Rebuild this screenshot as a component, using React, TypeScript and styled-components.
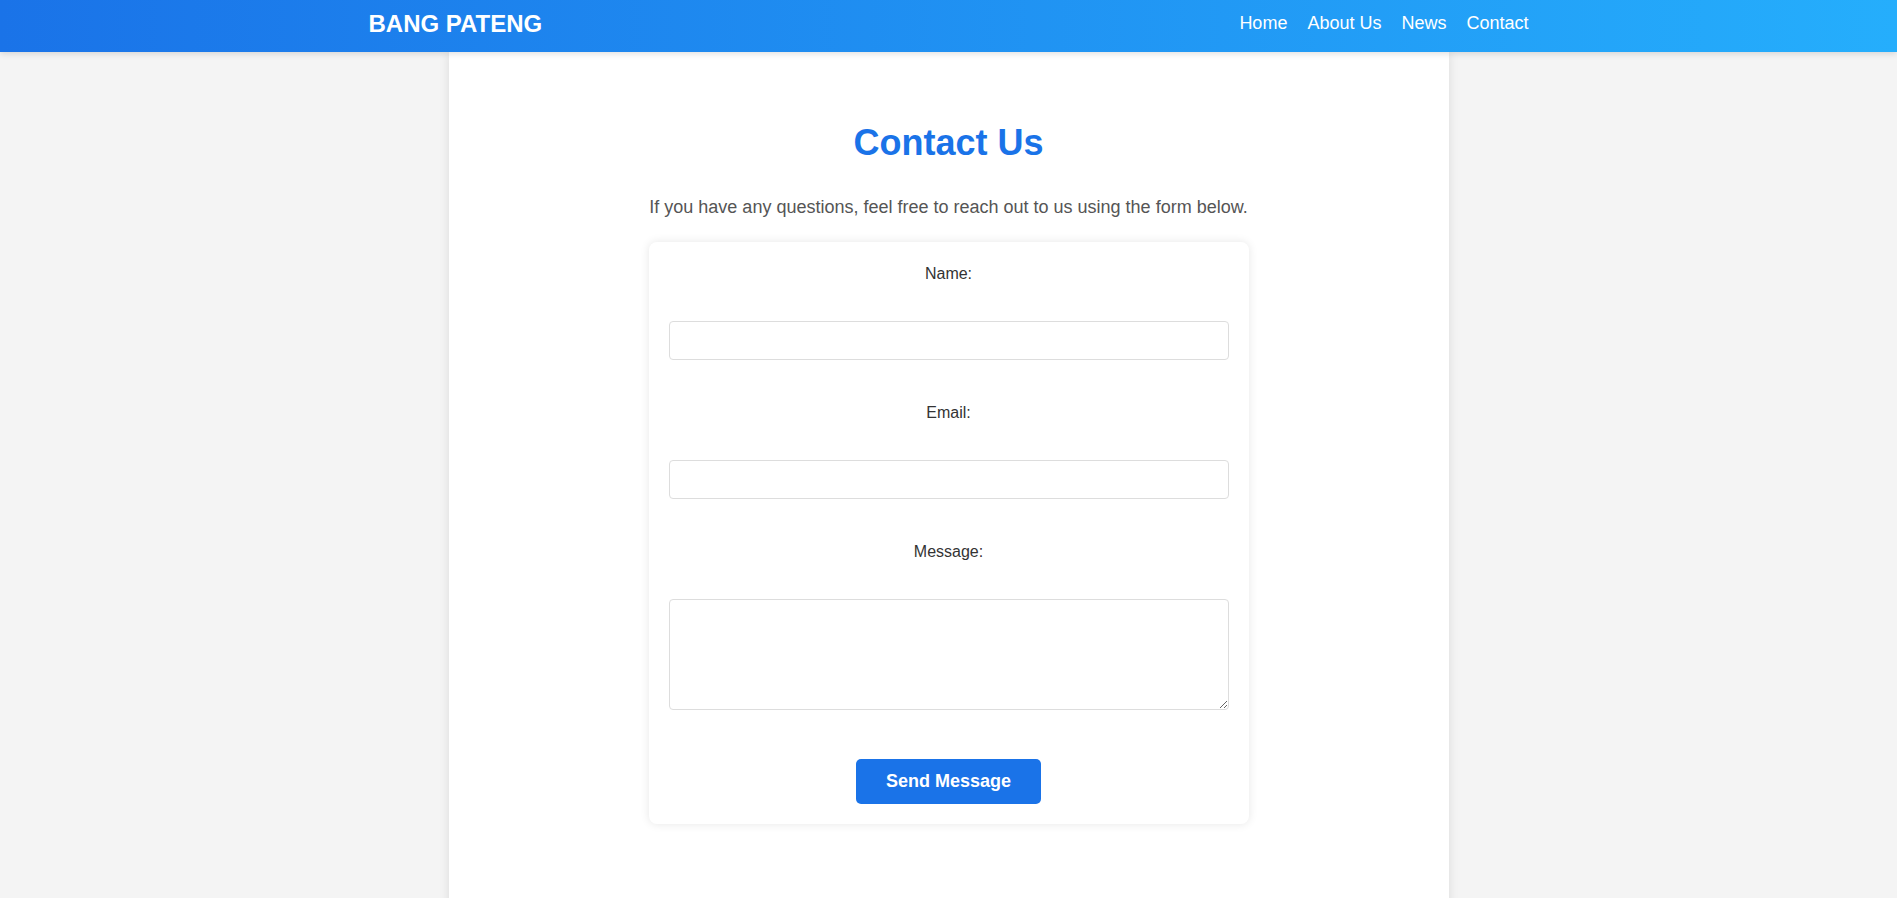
import React from 'react';
import styled, { createGlobalStyle } from 'styled-components';

const GlobalStyle = createGlobalStyle`
  body {
    margin: 0;
    background: #f4f4f4;
    font-family: "Liberation Sans", Arial, sans-serif;
  }
  * { box-sizing: border-box; }
`;

const Header = styled.header`
  height: 52px;
  background: linear-gradient(to right, #1a73e8, #25aefc);
  box-shadow: 0 2px 6px rgba(0, 0, 0, 0.12);
  position: relative;
  z-index: 1;
`;

const HeaderInner = styled.div`
  max-width: 1160px;
  height: 100%;
  margin: 0 auto;
  padding-bottom: 5px;
  display: flex;
  align-items: center;
  justify-content: space-between;
`;

const Brand = styled.div`
  color: #fff;
  font-size: 24px;
  font-weight: bold;
`;

const Nav = styled.nav`
  display: flex;
  gap: 20px;
`;

const NavLink = styled.a`
  color: #fff;
  font-size: 18px;
  text-decoration: none;
  cursor: pointer;
`;

const Main = styled.main`
  max-width: 1000px;
  min-height: 900px;
  margin: 0 auto;
  padding: 70px 20px 40px;
  background: #fff;
  box-shadow: 0 0 10px rgba(0, 0, 0, 0.1);
  display: flex;
  flex-direction: column;
  align-items: center;
`;

const Title = styled.h2`
  margin: 0 0 33px;
  color: #1a73e8;
  font-size: 36px;
  font-weight: bold;
`;

const Intro = styled.p`
  margin: 0 0 24px;
  color: #555;
  font-size: 18px;
`;

const Card = styled.form`
  width: 600px;
  padding: 20px;
  background: #fff;
  border-radius: 8px;
  box-shadow: 0 0 10px rgba(0, 0, 0, 0.1);
  display: flex;
  flex-direction: column;
`;

const Label = styled.label`
  display: block;
  margin: 3px 0 38px;
  text-align: center;
  color: #333;
  font-size: 16px;
`;

const Input = styled.input`
  display: block;
  width: 100%;
  height: 39px;
  margin-bottom: 41px;
  padding: 10px;
  border: 1px solid #ddd;
  border-radius: 4px;
  font-family: inherit;
  font-size: 16px;
`;

const TextArea = styled.textarea`
  display: block;
  width: 100%;
  height: 111px;
  margin-bottom: 49px;
  padding: 10px;
  border: 1px solid #ddd;
  border-radius: 4px;
  font-family: inherit;
  font-size: 16px;
`;

const SendButton = styled.button`
  align-self: center;
  padding: 12px 30px;
  border: none;
  border-radius: 5px;
  background: #1a73e8;
  color: #fff;
  font-family: inherit;
  font-size: 18px;
  font-weight: bold;
  cursor: pointer;
`;

export default function App() {
  return (
    <>
      <GlobalStyle />
      <Header>
        <HeaderInner>
          <Brand>BANG PATENG</Brand>
          <Nav>
            <NavLink>Home</NavLink>
            <NavLink>About Us</NavLink>
            <NavLink>News</NavLink>
            <NavLink>Contact</NavLink>
          </Nav>
        </HeaderInner>
      </Header>
      <Main>
        <Title>Contact Us</Title>
        <Intro>If you have any questions, feel free to reach out to us using the form below.</Intro>
        <Card onSubmit={e => e.preventDefault()}>
          <Label htmlFor="name">Name:</Label>
          <Input id="name" type="text" />
          <Label htmlFor="email">Email:</Label>
          <Input id="email" type="email" />
          <Label htmlFor="message">Message:</Label>
          <TextArea id="message" />
          <SendButton type="submit">Send Message</SendButton>
        </Card>
      </Main>
    </>
  );
}
